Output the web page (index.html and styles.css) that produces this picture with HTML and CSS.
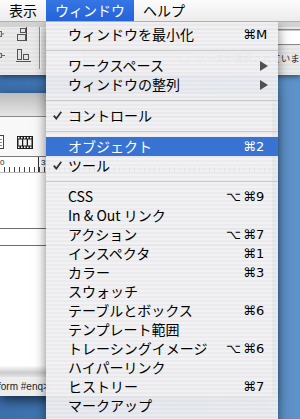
FILE: index.html
```html
<!DOCTYPE html>
<html lang="ja">
<head>
<meta charset="utf-8">
<title>ウィンドウ</title>
<link rel="stylesheet" href="styles.css">
</head>
<body>
<div class="screen">
  <header class="menubar">
    <span class="mb-item">表示</span>
    <span class="mb-item active">ウィンドウ</span>
    <span class="mb-item">ヘルプ</span>
  </header>

  <div class="desk">
    <section class="toolwin">
      <div class="tw-icons">
        <svg width="39" height="40" viewBox="0 0 39 40">
          <rect x="-4.5" y="4.5" width="6" height="5" fill="#dcdcdc" stroke="#666"/>
          <line x1="1.5" y1="7" x2="4" y2="7" stroke="#666"/>
          <line x1="26.5" y1="0" x2="26.5" y2="14" stroke="#444"/>
          <rect x="20.5" y="1.5" width="5" height="4" fill="#e4e4e4" stroke="#555"/>
          <rect x="17.5" y="7.5" width="8" height="6" fill="#e4e4e4" stroke="#555"/>
          <rect x="-4.5" y="26.5" width="6" height="4" fill="#dcdcdc" stroke="#666"/>
          <line x1="1.5" y1="28.5" x2="5" y2="28.5" stroke="#666"/>
          <rect x="17.5" y="22.5" width="4" height="10" fill="#e4e4e4" stroke="#555"/>
          <rect x="23.5" y="27.5" width="5" height="5" fill="#e4e4e4" stroke="#555"/>
          <line x1="16" y1="34.5" x2="31" y2="34.5" stroke="#45577c"/>
        </svg>
      </div>
      <div class="tw-fields">
        <div class="tw-row">
          <span class="field f-small"></span>
          <span class="field f-url"></span>
        </div>
        <div class="tw-row">
          <span class="field f-small2"></span>
          <span class="qbox"></span>
          <span class="note">ソースが選択されていません</span>
        </div>
      </div>
    </section>

    <section class="docwin">
      <div class="dw-title"></div>
      <div class="dw-tabs"></div>
      <div class="dw-tools">
        <svg class="ic-page" width="5" height="14" viewBox="0 0 5 14">
          <rect x="-6.5" y="0.5" width="10" height="13" fill="#fff" stroke="#444"/>
          <line x1="-4" y1="4.5" x2="2" y2="4.5" stroke="#888"/>
          <line x1="-4" y1="7.5" x2="2" y2="7.5" stroke="#888"/>
          <line x1="-4" y1="10.5" x2="2" y2="10.5" stroke="#888"/>
        </svg>
        <svg class="ic-film" width="16" height="13" viewBox="0 0 16 13">
          <rect x="0" y="0" width="16" height="13" fill="#1e1e1e"/>
          <g fill="#fff">
            <rect x="1" y="1" width="1.5" height="1.5"/><rect x="4" y="1" width="1.5" height="1.5"/>
            <rect x="7" y="1" width="1.5" height="1.5"/><rect x="10" y="1" width="1.5" height="1.5"/>
            <rect x="13" y="1" width="1.5" height="1.5"/>
            <rect x="1" y="10.5" width="1.5" height="1.5"/><rect x="4" y="10.5" width="1.5" height="1.5"/>
            <rect x="7" y="10.5" width="1.5" height="1.5"/><rect x="10" y="10.5" width="1.5" height="1.5"/>
            <rect x="13" y="10.5" width="1.5" height="1.5"/>
          </g>
          <g fill="#f2f2f2">
            <rect x="1.5" y="3.5" width="3.5" height="6"/>
            <rect x="6.2" y="3.5" width="3.5" height="6"/>
            <rect x="11" y="3.5" width="3.5" height="6"/>
          </g>
        </svg>
      </div>
      <div class="dw-ruler">
        <span class="r-num r0">0</span>
        <span class="r-major"></span>
        <span class="r-num">35</span>
      </div>
      <div class="dw-content">
        <div class="tbl"></div>
      </div>
      <div class="dw-scroll"></div>
      <div class="dw-status">form #enq&gt;</div>
    </section>
  </div>

  <nav class="menu">
    <div class="mi"><span class="mark"></span><span class="label">ウィンドウを最小化</span><span class="sc"><span class="mods"></span><span class="cmd">⌘</span><span class="key">M</span></span></div>
    <div class="sep"></div>
    <div class="mi"><span class="mark"></span><span class="label">ワークスペース</span><span class="sc"><span class="mods"></span><span class="cmd"></span><span class="key"><i class="arrow"></i></span></span></div>
    <div class="mi"><span class="mark"></span><span class="label">ウィンドウの整列</span><span class="sc"><span class="mods"></span><span class="cmd"></span><span class="key"><i class="arrow"></i></span></span></div>
    <div class="sep"></div>
    <div class="mi"><span class="mark"><svg class="check" width="9" height="9" viewBox="0 0 9 9"><path d="M0.8 4.6 L3.3 7.6 L8.3 0.8" fill="none" stroke="#333" stroke-width="1.8"/></svg></span><span class="label">コントロール</span></div>
    <div class="sep"></div>
    <div class="mi sel"><span class="mark"></span><span class="label">オブジェクト</span><span class="sc"><span class="mods"></span><span class="cmd">⌘</span><span class="key">2</span></span></div>
    <div class="mi"><span class="mark"><svg class="check" width="9" height="9" viewBox="0 0 9 9"><path d="M0.8 4.6 L3.3 7.6 L8.3 0.8" fill="none" stroke="#333" stroke-width="1.8"/></svg></span><span class="label">ツール</span></div>
    <div class="sep"></div>
    <div class="mi"><span class="mark"></span><span class="label">CSS</span><span class="sc"><span class="mods">⌥</span><span class="cmd">⌘</span><span class="key">9</span></span></div>
    <div class="mi"><span class="mark"></span><span class="label">In &amp; Out リンク</span></div>
    <div class="mi"><span class="mark"></span><span class="label">アクション</span><span class="sc"><span class="mods">⌥</span><span class="cmd">⌘</span><span class="key">7</span></span></div>
    <div class="mi"><span class="mark"></span><span class="label">インスペクタ</span><span class="sc"><span class="mods"></span><span class="cmd">⌘</span><span class="key">1</span></span></div>
    <div class="mi"><span class="mark"></span><span class="label">カラー</span><span class="sc"><span class="mods"></span><span class="cmd">⌘</span><span class="key">3</span></span></div>
    <div class="mi"><span class="mark"></span><span class="label">スウォッチ</span></div>
    <div class="mi"><span class="mark"></span><span class="label">テーブルとボックス</span><span class="sc"><span class="mods"></span><span class="cmd">⌘</span><span class="key">6</span></span></div>
    <div class="mi"><span class="mark"></span><span class="label">テンプレート範囲</span></div>
    <div class="mi"><span class="mark"></span><span class="label">トレーシングイメージ</span><span class="sc"><span class="mods">⌥</span><span class="cmd">⌘</span><span class="key">6</span></span></div>
    <div class="mi"><span class="mark"></span><span class="label">ハイパーリンク</span></div>
    <div class="mi"><span class="mark"></span><span class="label">ヒストリー</span><span class="sc"><span class="mods"></span><span class="cmd">⌘</span><span class="key">7</span></span></div>
    <div class="mi"><span class="mark"></span><span class="label">マークアップ</span></div>
  </nav>
</div>
</body>
</html>
```

FILE: styles.css
```css
* { box-sizing: border-box; margin: 0; padding: 0; }
html, body { width: 300px; height: 419px; overflow: hidden; }
body {
  font-family: "Noto Sans CJK JP", "DejaVu Sans", sans-serif;
  color: #000;
  background: #5a8fc6;
}
.screen {
  position: relative;
  width: 300px;
  height: 419px;
  display: flex;
  flex-direction: column;
  overflow: hidden;
}

/* menu bar */
.menubar {
  position: relative;
  z-index: 3;
  flex: none;
  height: 22px;
  display: flex;
  font-size: 14px;
  line-height: 21px;
  background: linear-gradient(#fcfcfc, #ececec);
  border-bottom: 1px solid #b0b0b0;
}
.mb-item { padding: 0 9px; white-space: nowrap; }
.mb-item.active { background: linear-gradient(#3575e4, #2463d8); color: #fff; }

/* desktop */
.desk {
  flex: 1;
  display: flex;
  flex-direction: column;
  background: linear-gradient(to right, #3b70ae, #4f85bf 60%, #5e93c9);
}

/* tool palette window */
.toolwin {
  flex: none;
  height: 53px;
  display: flex;
  padding-top: 5px;
  background:
    linear-gradient(#d2d2d2 0 5px, transparent 5px),
    repeating-linear-gradient(#ebebeb 0 2px, #e4e4e4 2px 4px);
  box-shadow: 0 2px 5px rgba(0, 0, 0, 0.45);
  position: relative;
  z-index: 1;
}
.tw-icons {
  flex: none;
  width: 40px;
  height: 42px;
  border-right: 1px solid #8e8e8e;
  box-shadow: 1px 0 0 #fafafa;
}
.tw-icons svg { display: block; }
.tw-fields {
  flex: 1;
  display: flex;
  flex-direction: column;
  gap: 2px;
  padding-left: 6px;
  white-space: nowrap;
}
.tw-row { display: flex; align-items: center; height: 19px; }
.field {
  height: 16px;
  border: 1px solid #8a8a8a;
  box-shadow: inset 0 1px 0 #c8c8c8;
  background: #fff;
}
.f-small { width: 33px; }
.f-small2 { width: 39px; }
.f-url { margin-left: 98px; width: 140px; }
.qbox {
  margin-left: 95px;
  width: 9px;
  height: 10px;
  border: 1px solid #999;
  background: #f4f4f4;
}
.note { margin-left: 7px; font-size: 9.5px; line-height: 12px; color: #333; }

/* document window */
.docwin {
  flex: none;
  width: 272px;
  height: 303px;
  margin-top: 18px;
  display: flex;
  flex-direction: column;
  background: #fff;
  box-shadow: 0 4px 12px rgba(0, 0, 0, 0.65);
}
.dw-title {
  height: 24px;
  background: linear-gradient(#bcbcbc, #e6e6e6);
  border-bottom: 1px solid #8a8a8a;
}
.dw-tabs { height: 17px; background: #f8f8f8; }
.dw-tools {
  height: 23px;
  display: flex;
  align-items: flex-start;
  padding-top: 1px;
  background: #f8f8f8;
  border-bottom: 1px solid #7a7a7a;
}
.ic-page { display: block; }
.ic-film { display: block; margin-left: 12px; margin-top: 1px; }
.dw-ruler {
  height: 16px;
  display: flex;
  align-items: flex-start;
  font-family: "Liberation Sans", sans-serif;
  font-size: 8px;
  line-height: 9px;
  color: #222;
  background:
    repeating-linear-gradient(to right, transparent 0 4px, #444 4px 5px) left bottom / 100% 5px no-repeat,
    #fff;
  border-bottom: 1px solid #bbb;
}
.r-num { padding-top: 1px; }
.r0 { width: 38px; }
.r-major { width: 1px; height: 15px; background: #333; margin-right: 2px; }
.dw-content { flex: 1; background: #fff; padding-top: 55px; }
.tbl { height: 18px; border-top: 1px solid #6d6d6d; border-bottom: 1px solid #6d6d6d; }
.dw-scroll { height: 11px; background: linear-gradient(#fafafa, #cdcdcd 60%, #e2e2e2); }
.dw-status {
  height: 19px;
  background: #eeeeee;
  font-family: "Liberation Sans", sans-serif;
  font-size: 10px;
  line-height: 19px;
  color: #222;
  text-indent: -2px;
  white-space: nowrap;
}

/* pulled-down menu */
.menu {
  position: absolute;
  z-index: 2;
  left: 46px;
  top: 22px;
  width: 232px;
  height: 430px;
  padding-top: 3px;
  background: repeating-linear-gradient(rgba(241, 241, 243, 0.95) 0 2px, rgba(234, 234, 237, 0.95) 2px 4px);
  box-shadow: 0 4px 11px rgba(0, 0, 0, 0.5);
}
.mi {
  height: 19px;
  display: flex;
  align-items: center;
  font-size: 14px;
  line-height: 19px;
  white-space: nowrap;
}
.mi.sel { background: #3873d3; color: #fff; }
.mark { flex: none; width: 22px; height: 19px; display: flex; align-items: center; padding-left: 7px; }
.check { display: block; }
.label { flex: 1; }
.sc {
  flex: none;
  display: flex;
  align-items: center;
  margin-right: 10px;
  font-family: "DejaVu Sans", sans-serif;
  font-size: 13px;
}
.mods { width: 26px; padding-right: 2px; text-align: right; }
.cmd { width: 13px; }
.key { width: 12px; display: flex; align-items: center; }
.arrow {
  display: block;
  margin-left: 4px;
  width: 0;
  height: 0;
  border-left: 8px solid #505050;
  border-top: 5px solid transparent;
  border-bottom: 5px solid transparent;
}
.sep { height: 12px; display: flex; align-items: center; }
.sep::before { content: ""; flex: 1; height: 1px; background: #c9c9c9; }
```
